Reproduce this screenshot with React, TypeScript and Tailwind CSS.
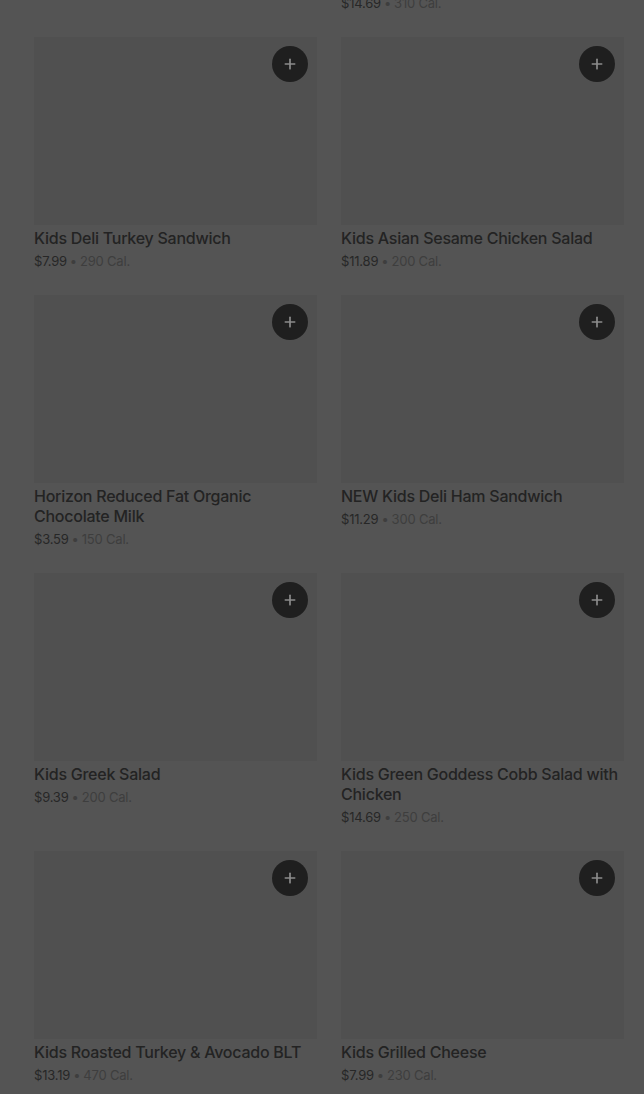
import { Plus } from 'lucide-react';

type Item = { name: string; price: string; cal: number };

const items: Item[] = [
  { name: 'Kids Mac & Cheese', price: '$8.49', cal: 420 },
  { name: 'Kids Strawberry Poppyseed Salad with Chicken', price: '$14.69', cal: 310 },
  { name: 'Kids Deli Turkey Sandwich', price: '$7.99', cal: 290 },
  { name: 'Kids Asian Sesame Chicken Salad', price: '$11.89', cal: 200 },
  { name: 'Horizon Reduced Fat Organic Chocolate Milk', price: '$3.59', cal: 150 },
  { name: 'NEW Kids Deli Ham Sandwich', price: '$11.29', cal: 300 },
  { name: 'Kids Greek Salad', price: '$9.39', cal: 200 },
  { name: 'Kids Green Goddess Cobb Salad with Chicken', price: '$14.69', cal: 250 },
  { name: 'Kids Roasted Turkey & Avocado BLT', price: '$13.19', cal: 470 },
  { name: 'Kids Grilled Cheese', price: '$7.99', cal: 230 },
];

function ItemCard({ item }: { item: Item }) {
  return (
    <div className="flex flex-col">
      <div className="relative h-[188px] bg-[#505050]">
        <button className="absolute right-[9px] top-[9px] flex h-9 w-9 items-center justify-center rounded-full bg-[#1f1f1f] text-[#8c8c8c]">
          <Plus size={16} strokeWidth={2.5} />
        </button>
      </div>
      <p className="mt-[3px] text-[16px] font-medium leading-5 tracking-[-0.25px] text-[#232323]">{item.name}</p>
      <p className="mt-[3px] text-[13px] leading-5 tracking-[-0.2px]">
        <span className="text-[#272727]">{item.price}</span>
        <span className="mx-[3px] text-[#3e3e3e]">•</span>
        <span className="text-[#3e3e3e]">{item.cal} Cal.</span>
      </p>
    </div>
  );
}

export default function App() {
  return (
    <div
      className="h-[1094px] overflow-hidden bg-[#545454]"
      style={{ fontFamily: 'Inter, "Noto Sans", sans-serif' }}
    >
      <div className="-mt-[241px] grid grid-cols-2 gap-x-6 gap-y-6 pl-[34px] pr-[20px]">
        {items.map((item) => (
          <ItemCard key={item.name} item={item} />
        ))}
      </div>
    </div>
  );
}
